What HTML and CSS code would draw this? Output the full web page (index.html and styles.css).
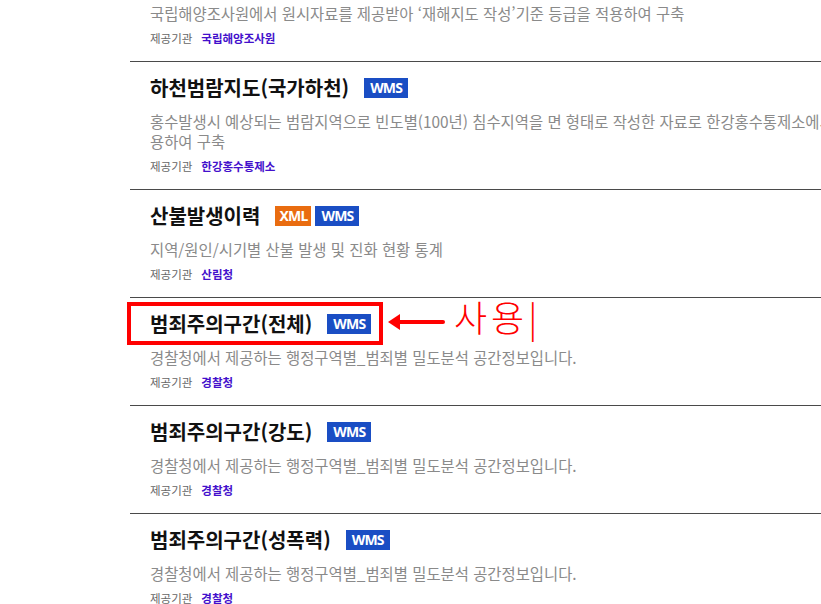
FILE: index.html
```html
<!DOCTYPE html>
<html lang="ko">
<head>
    <meta charset="UTF-8">
    <meta name="viewport" content="width=device-width, initial-scale=1.0">
    <title>공간정보 목록</title>
    <link rel="stylesheet" href="styles.css">
</head>
<body>
    <ul class="data-list">
        <!-- 이전 항목 (위쪽이 잘려 보임) -->
        <li class="data-item data-item-cut">
            <p class="data-desc">국립해양조사원에서 원시자료를 제공받아 ‘재해지도 작성’기준 등급을 적용하여 구축</p>
            <p class="data-org"><span class="org-label">제공기관</span><span class="org-name">국립해양조사원</span></p>
        </li>

        <li class="data-item">
            <div class="data-head">
                <h3 class="data-title">하천범람지도(국가하천)</h3>
                <div class="badges"><span class="badge badge-wms">WMS</span></div>
            </div>
            <p class="data-desc">홍수발생시 예상되는 범람지역으로 빈도별(100년) 침수지역을 면 형태로 작성한 자료로 한강홍수통제소에서 제공받아 이용하여 구축</p>
            <p class="data-org"><span class="org-label">제공기관</span><span class="org-name">한강홍수통제소</span></p>
        </li>

        <li class="data-item">
            <div class="data-head">
                <h3 class="data-title">산불발생이력</h3>
                <div class="badges"><span class="badge badge-xml">XML</span><span class="badge badge-wms">WMS</span></div>
            </div>
            <p class="data-desc">지역/원인/시기별 산불 발생 및 진화 현황 통계</p>
            <p class="data-org"><span class="org-label">제공기관</span><span class="org-name">산림청</span></p>
        </li>

        <li class="data-item data-item-marked">
            <div class="data-head">
                <h3 class="data-title">범죄주의구간(전체)</h3>
                <div class="badges"><span class="badge badge-wms">WMS</span></div>
            </div>
            <p class="data-desc">경찰청에서 제공하는 행정구역별_범죄별 밀도분석 공간정보입니다.</p>
            <p class="data-org"><span class="org-label">제공기관</span><span class="org-name">경찰청</span></p>

            <!-- 표시용 주석 -->
            <div class="mark-box"></div>
            <svg class="mark-arrow" width="60" height="20" viewBox="0 0 60 20">
                <polygon points="1,10 13,2 13,18" fill="#ff0000"/>
                <line x1="10" y1="10" x2="56" y2="10" stroke="#ff0000" stroke-width="4" stroke-linecap="round"/>
            </svg>
            <span class="mark-label">사용|</span>
        </li>

        <li class="data-item">
            <div class="data-head">
                <h3 class="data-title">범죄주의구간(강도)</h3>
                <div class="badges"><span class="badge badge-wms">WMS</span></div>
            </div>
            <p class="data-desc">경찰청에서 제공하는 행정구역별_범죄별 밀도분석 공간정보입니다.</p>
            <p class="data-org"><span class="org-label">제공기관</span><span class="org-name">경찰청</span></p>
        </li>

        <li class="data-item">
            <div class="data-head">
                <h3 class="data-title">범죄주의구간(성폭력)</h3>
                <div class="badges"><span class="badge badge-wms">WMS</span></div>
            </div>
            <p class="data-desc">경찰청에서 제공하는 행정구역별_범죄별 밀도분석 공간정보입니다.</p>
            <p class="data-org"><span class="org-label">제공기관</span><span class="org-name">경찰청</span></p>
        </li>
    </ul>
</body>
</html>
```

FILE: styles.css
```css
html, body {
    margin: 0;
    overflow: hidden;
    background: #fff;
}
body {
    font-family: "Noto Sans CJK KR", "Noto Sans", sans-serif;
    color: #111;
}
.data-list {
    list-style: none;
    margin: 0 0 0 130px;
    padding: 0;
    width: 810px;
}
.data-item {
    border-top: 1px solid #4a4a4a;
    padding: 13px 20px 14px 20px;
}
.data-item-cut {
    border-top: none;
    padding-top: 3px;
}
.data-head {
    display: flex;
    align-items: center;
    gap: 15px;
    height: 26px;
}
.data-title {
    margin: 0;
    font-size: 20px;
    font-weight: bold;
    line-height: 26px;
    color: #111;
}
.badges {
    display: flex;
    gap: 4px;
}
.badge {
    display: inline-block;
    height: 20px;
    line-height: 20px;
    padding: 0 6px;
    font-family: "Noto Sans", sans-serif;
    font-size: 14px;
    font-weight: bold;
    letter-spacing: -0.8px;
    color: #fff;
}
.badge-wms {
    background: #1a4ec4;
}
.badge-xml {
    background: #e96c10;
    padding: 0 4px;
}
.data-desc {
    margin: 10px 0 0 0;
    font-size: 15.4px;
    line-height: 20px;
    color: #8a8a8a;
}
.data-item-cut .data-desc {
    margin-top: 0;
}
.data-org {
    margin: 6px 0 0 0;
    font-size: 11.5px;
    line-height: 18px;
}
.org-label {
    color: #666;
    margin-right: 9px;
}
.org-name {
    color: #4310cc;
    font-weight: bold;
}

/* annotation over the list */
.data-item-marked {
    position: relative;
}
.mark-box {
    position: absolute;
    left: -3px;
    top: 4px;
    width: 256px;
    height: 43px;
    border: 4px solid #ff0000;
    box-sizing: border-box;
}
.mark-arrow {
    position: absolute;
    left: 257px;
    top: 14px;
}
.mark-label {
    position: absolute;
    left: 324px;
    top: -2px;
    font-size: 36px;
    font-weight: 300;
    line-height: 40px;
    color: #ff0000;
    letter-spacing: 4px;
}
```
